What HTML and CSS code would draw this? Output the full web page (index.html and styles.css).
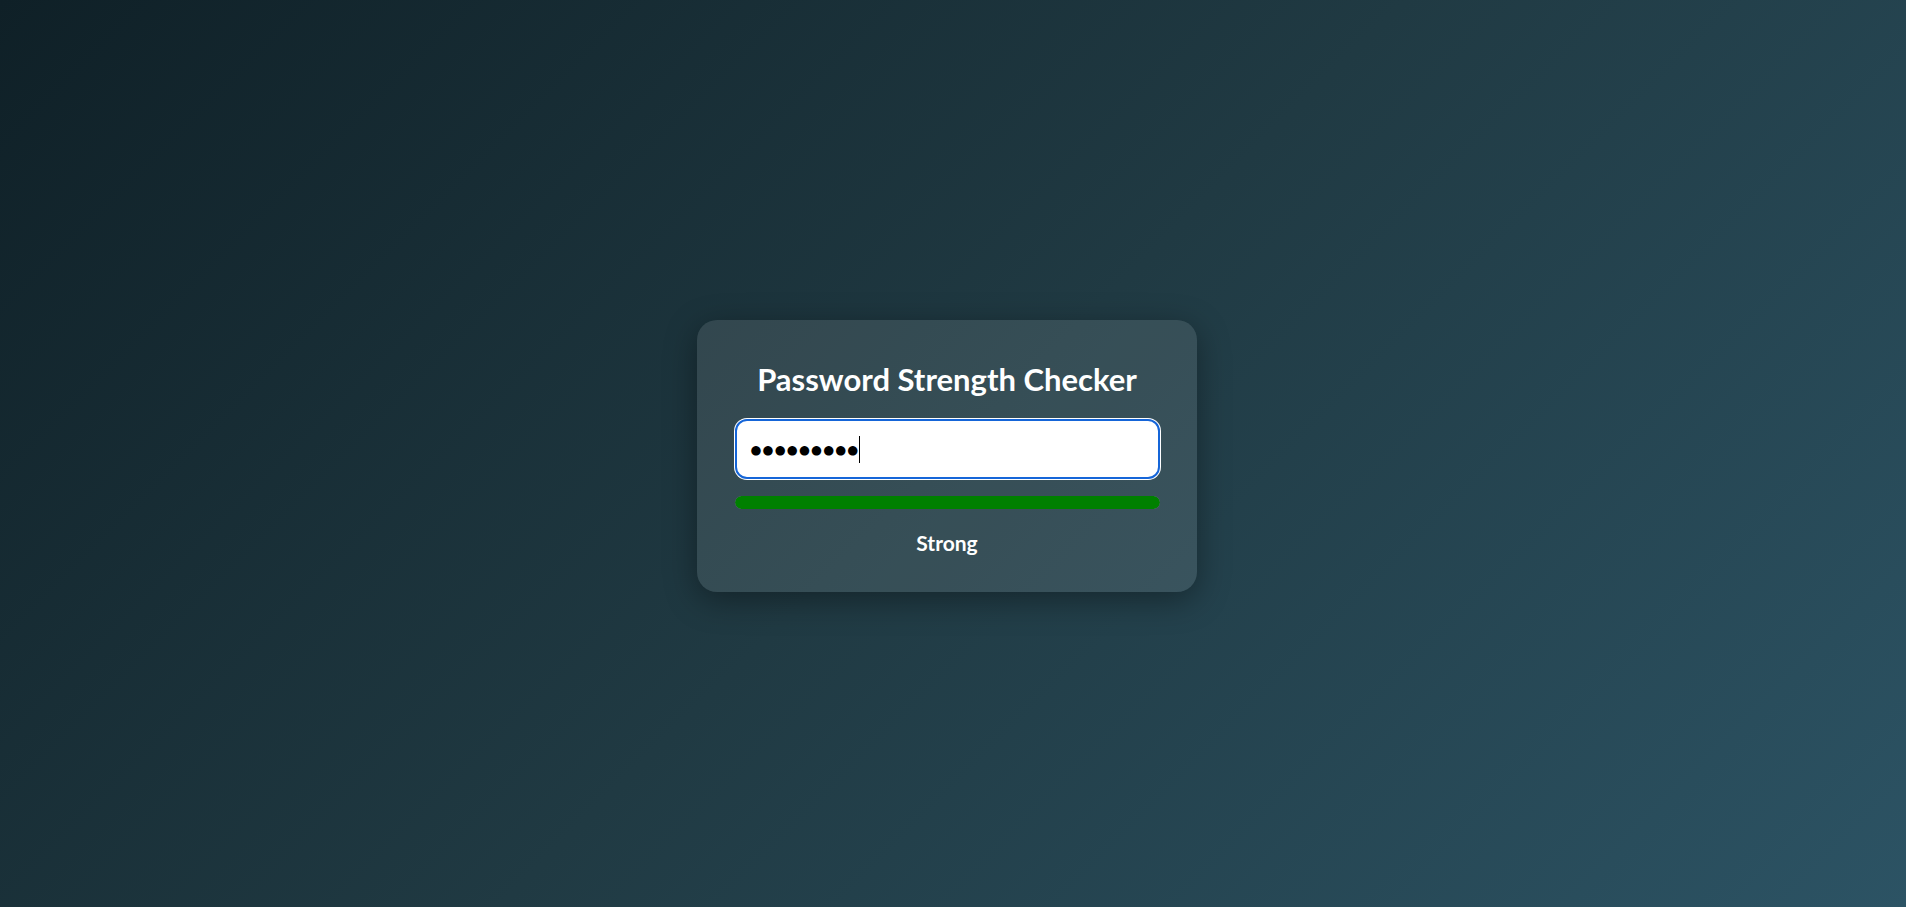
FILE: index.html
```html
<!DOCTYPE html>
<html lang="en">
<head>
<meta charset="utf-8">
<title>Password Strength Checker</title>
<link rel="stylesheet" href="styles.css">
</head>
<body>
<main class="page">
  <section class="card">
    <h2 class="title">Password Strength Checker</h2>
    <div class="field"><span class="dots">●●●●●●●●●</span><span class="caret"></span></div>
    <div class="meter"><div class="meter-fill" style="width:100%"></div></div>
    <p class="label">Strong</p>
  </section>
</main>
</body>
</html>
```

FILE: styles.css
```css
html, body {
  margin: 0;
  padding: 0;
  height: 100%;
}
body {
  background: linear-gradient(135deg, #0f2027 0%, #203a43 50%, #2c5364 100%);
  font-family: "Lato", "Open Sans", sans-serif;
  color: #fff;
}
.page {
  height: 100%;
  box-sizing: border-box;
  padding-right: 12px;
  padding-top: 5px;
  display: flex;
  align-items: center;
  justify-content: center;
}
.card {
  width: 500px;
  box-sizing: border-box;
  padding: 41px 37.5px 37px;
  background: rgba(255, 255, 255, 0.1);
  border-radius: 20px;
  box-shadow: 0 8px 32px rgba(0, 0, 0, 0.37);
  display: flex;
  flex-direction: column;
  text-align: center;
}
.title {
  margin: 0 0 21px;
  font-size: 31px;
  font-weight: 700;
  line-height: 1.2;
}
.field {
  height: 60px;
  box-sizing: border-box;
  background: #fff;
  border: 2px solid #1565d8;
  border-radius: 12px;
  box-shadow: 0 0 0 1px #ffffff;
  display: flex;
  align-items: center;
  padding: 0 14px;
  text-align: left;
}
.dots {
  color: #000;
  font-family: "DejaVu Sans", sans-serif;
  font-size: 12.5px;
  letter-spacing: 1.2px;
}
.caret {
  width: 1px;
  height: 27px;
  background: #000;
}
.meter {
  margin-top: 17px;
  height: 13px;
  border-radius: 7px;
  background: rgba(255, 255, 255, 0.2);
  overflow: hidden;
}
.meter-fill {
  height: 100%;
  background: #008000;
  border-radius: 7px;
}
.label {
  margin: 21px 0 0;
  font-size: 21px;
  font-weight: 700;
  line-height: 1.2;
}
```
